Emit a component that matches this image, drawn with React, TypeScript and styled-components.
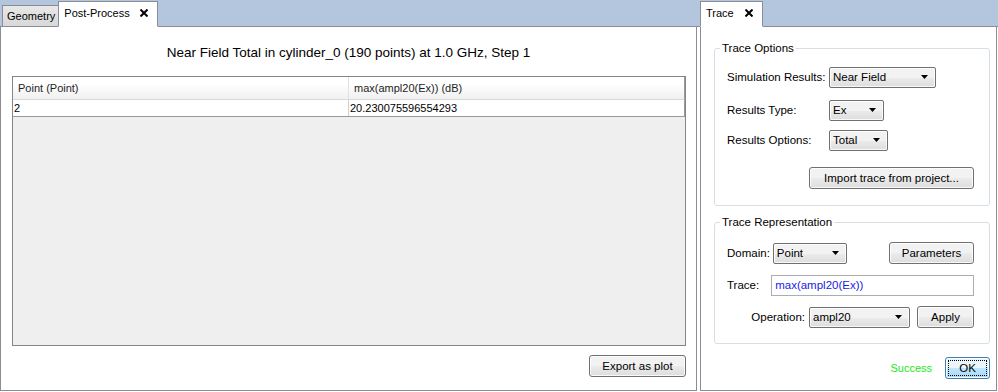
import React from 'react';
import styled, { createGlobalStyle } from 'styled-components';

const GlobalStyle = createGlobalStyle`
  html, body {
    margin: 0;
    padding: 0;
    background: #ffffff;
  }
  body {
    font-family: "Liberation Sans", Arial, sans-serif;
    font-size: 11px;
    color: #000;
  }
`;

const Root = styled.div`
  display: flex;
  width: 998px;
  height: 392px;
  overflow: hidden;
`;

const Pane = styled.div<{ $width: number }>`
  display: flex;
  flex-direction: column;
  width: ${(p) => p.$width}px;
  height: 100%;
`;

const TabBar = styled.div<{ $pad: number }>`
  display: flex;
  align-items: flex-end;
  height: 26px;
  padding-left: ${(p) => p.$pad}px;
  background: #b4c6de;
  border-bottom: 1px solid #8a8c96;
`;

const Tab = styled.div<{ $active?: boolean; $gap?: number }>`
  display: flex;
  align-items: center;
  gap: ${(p) => p.$gap ?? 10}px;
  box-sizing: border-box;
  height: ${(p) => (p.$active ? 26 : 22)}px;
  margin-bottom: -1px;
  padding: ${(p) => (p.$active ? '0 9px 2px 5px' : '0 3px 0 4px')};
  font-size: 11px;
  background: ${(p) => (p.$active ? '#ffffff' : 'linear-gradient(#e8e8e8, #d8d8d8)')};
  border: 1px solid #8a8c96;
  border-bottom: 1px solid ${(p) => (p.$active ? '#ffffff' : '#8a8c96')};
  border-right: ${(p) => (p.$active ? '1px solid #8a8c96' : 'none')};
`;

const CloseIcon = () => (
  <svg width="8" height="8" viewBox="0 0 8 8">
    <path d="M1.2 1.2 L6.8 6.8 M6.8 1.2 L1.2 6.8" stroke="#000" strokeWidth="2" strokeLinecap="square" />
  </svg>
);

const Body = styled.div<{ $ml: number; $mr: number }>`
  flex: 1;
  display: flex;
  flex-direction: column;
  margin: 0 ${(p) => p.$mr}px 1px ${(p) => p.$ml}px;
  border: 1px solid #8a8c96;
  border-top: none;
  background: #fff;
`;

const Title = styled.div`
  height: 48px;
  display: flex;
  align-items: center;
  justify-content: center;
  padding-top: 1px;
  font-size: 13.5px;
`;

const Table = styled.div`
  flex: none;
  height: 268px;
  margin: 0 10px 0 11px;
  border: 1px solid #858585;
  background: #efefef;
  display: flex;
  flex-direction: column;
`;

const Row = styled.div<{ $head?: boolean }>`
  display: grid;
  grid-template-columns: 336px 1fr;
  height: ${(p) => (p.$head ? 22 : 16)}px;
  background: ${(p) => (p.$head ? 'linear-gradient(#ffffff 30%, #f0f0f0)' : '#ffffff')};
  border-bottom: 1px solid ${(p) => (p.$head ? '#d8d8d8' : '#9a9a9a')};
  border-right: 1px solid #9a9a9a;
`;

const Cell = styled.div<{ $head?: boolean }>`
  display: flex;
  align-items: center;
  padding-left: ${(p) => (p.$head ? 5 : 1)}px;
  border-right: 1px solid ${(p) => (p.$head ? '#e2e2e2' : '#cfcfcf')};
  color: ${(p) => (p.$head ? '#1e1e1e' : '#000')};
  white-space: nowrap;
  &:last-child {
    border-right: none;
  }
`;

const Footer = styled.div`
  display: flex;
  justify-content: flex-end;
  padding: 9px 10px 0 0;
`;

const Button = styled.button<{ $w: number; $focus?: boolean }>`
  width: ${(p) => p.$w}px;
  height: 22px;
  padding: 0;
  font-family: "Liberation Sans", Arial, sans-serif;
  font-size: 11.5px;
  color: #000;
  border: 1px solid ${(p) => (p.$focus ? '#3c7fb1' : '#707070')};
  border-radius: 3px;
  background: ${(p) =>
    p.$focus ? 'linear-gradient(#eaf6fd 50%, #bee6fd 51%, #a7d9f5)' : 'linear-gradient(#f2f2f2 50%, #ebebeb 51%, #dddddd)'};
  box-shadow: inset 0 0 0 1px ${(p) => (p.$focus ? '#ffffff' : 'rgba(255,255,255,0.8)')};
  outline: ${(p) => (p.$focus ? '1px dotted #000' : 'none')};
  outline-offset: -4px;
`;

const Side = styled.div`
  display: flex;
  flex-direction: column;
  gap: 10px;
  padding: 15px 6px 0 13px;
`;

const Group = styled.fieldset<{ $h: number }>`
  margin: 0;
  height: ${(p) => p.$h}px;
  box-sizing: border-box;
  padding: 0 15px 0 12px;
  border: 1px solid #d5dfe5;
  border-radius: 3px;
  display: flex;
  flex-direction: column;
`;

const Legend = styled.legend`
  padding: 0 2px;
  margin-left: -7px;
  font-size: 11.5px;
`;

const FormRow = styled.div<{ $top: number; $end?: boolean }>`
  display: flex;
  align-items: center;
  justify-content: ${(p) => (p.$end ? 'flex-end' : 'flex-start')};
  margin-top: ${(p) => p.$top}px;
  height: 22px;
`;

const Label = styled.span<{ $w?: number }>`
  width: ${(p) => (p.$w ? `${p.$w}px` : 'auto')};
  font-size: 11.5px;
  white-space: nowrap;
`;

const Select = styled.div<{ $w: number; $ml?: number }>`
  display: flex;
  align-items: center;
  justify-content: space-between;
  box-sizing: border-box;
  width: ${(p) => p.$w}px;
  height: 21px;
  margin-left: ${(p) => p.$ml ?? 0}px;
  padding: 0 7px 0 3px;
  border: 1px solid #707070;
  border-radius: 2px;
  background: linear-gradient(#f2f2f2 50%, #ebebeb 51%, #dddddd);
  box-shadow: inset 0 0 0 1px rgba(255, 255, 255, 0.8);
  font-size: 11.5px;
`;

const Caret = () => (
  <svg width="7" height="4" viewBox="0 0 7 4">
    <path d="M0 0 H7 L3.5 4 Z" fill="#000" />
  </svg>
);

const Dropdown = ({ value, w, ml }: { value: string; w: number; ml?: number }) => (
  <Select $w={w} $ml={ml}>
    <span>{value}</span>
    <Caret />
  </Select>
);

const Input = styled.div`
  flex: 1;
  display: flex;
  align-items: center;
  box-sizing: border-box;
  height: 21px;
  margin-left: 12px;
  padding-left: 3px;
  border: 1px solid #abadb3;
  color: #1a1ae6;
  font-size: 11.5px;
`;

const Status = styled.div`
  display: flex;
  align-items: center;
  justify-content: flex-end;
  gap: 13px;
  margin-top: 13px;
  padding-right: 6px;
  color: #22e822;
  font-size: 11px;
`;

export default function App() {
  return (
    <>
      <GlobalStyle />
      <Root>
        <Pane $width={698}>
          <TabBar $pad={2}>
            <Tab>Geometry</Tab>
            <Tab $active>
              Post-Process
              <CloseIcon />
            </Tab>
          </TabBar>
          <Body $ml={0} $mr={1}>
            <Title>Near Field Total in cylinder_0 (190 points) at 1.0 GHz, Step 1</Title>
            <Table>
              <Row $head>
                <Cell $head>Point (Point)</Cell>
                <Cell $head>max(ampl20(Ex)) (dB)</Cell>
              </Row>
              <Row>
                <Cell>2</Cell>
                <Cell>20.230075596554293</Cell>
              </Row>
            </Table>
            <Footer>
              <Button $w={97}>Export as plot</Button>
            </Footer>
          </Body>
        </Pane>
        <Pane $width={300}>
          <TabBar $pad={2}>
            <Tab $active $gap={11}>
              Trace
              <CloseIcon />
            </Tab>
          </TabBar>
          <Body $ml={2} $mr={1}>
            <Side>
              <Group $h={164}>
                <Legend>Trace Options</Legend>
                <FormRow $top={12}>
                  <Label $w={102}>Simulation Results:</Label>
                  <Dropdown value="Near Field" w={107} />
                </FormRow>
                <FormRow $top={11}>
                  <Label $w={102}>Results Type:</Label>
                  <Dropdown value="Ex" w={55} />
                </FormRow>
                <FormRow $top={8}>
                  <Label $w={102}>Results Options:</Label>
                  <Dropdown value="Total" w={59} />
                </FormRow>
                <FormRow $top={16} $end>
                  <Button $w={165}>Import trace from project...</Button>
                </FormRow>
              </Group>
              <Group $h={128}>
                <Legend>Trace Representation</Legend>
                <FormRow $top={14}>
                  <Label>Domain:</Label>
                  <Dropdown value="Point" w={74} ml={3} />
                  <Button $w={85} style={{ marginLeft: 'auto' }}>
                    Parameters
                  </Button>
                </FormRow>
                <FormRow $top={10}>
                  <Label>Trace:</Label>
                  <Input>max(ampl20(Ex))</Input>
                </FormRow>
                <FormRow $top={10} $end>
                  <Label>Operation:</Label>
                  <Dropdown value="ampl20" w={101} ml={4} />
                  <Button $w={57} style={{ marginLeft: 7 }}>
                    Apply
                  </Button>
                </FormRow>
              </Group>
            </Side>
            <Status>
              Success
              <Button $w={45} $focus>
                OK
              </Button>
            </Status>
          </Body>
        </Pane>
      </Root>
    </>
  );
}
